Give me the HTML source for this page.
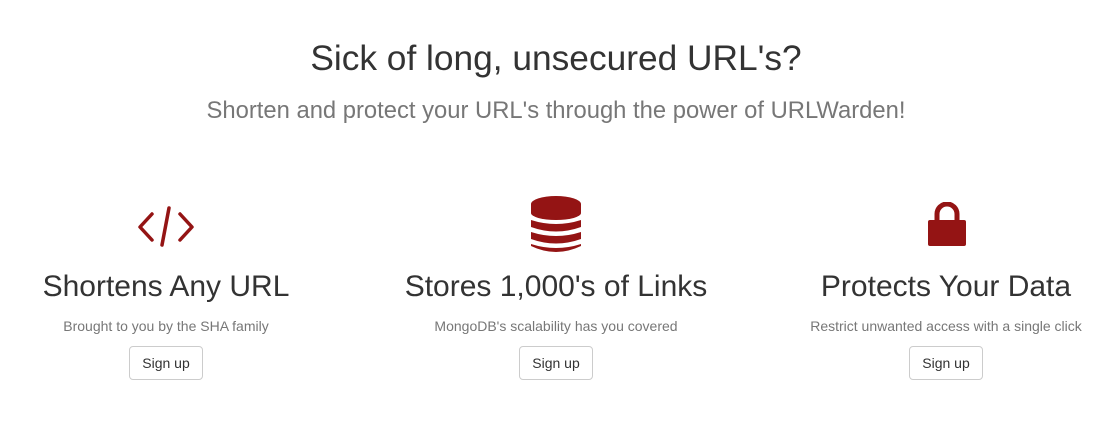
<!DOCTYPE html>
<html><head><style>
body{margin:0;width:1117px;height:424px;background:#fff;font-family:"Liberation Sans",sans-serif;color:#333;position:relative;overflow:hidden}
.c{position:absolute;text-align:center;white-space:nowrap;transform:translateX(-50%)}
h1{margin:0;font-weight:400;font-size:35.3px;line-height:40px}
.sub{font-size:23.8px;color:#777;line-height:28px}
h2{margin:0;font-weight:400;font-size:30px;line-height:34px}
.p{font-size:14px;color:#777;line-height:20px}
.btn{display:inline-block;box-sizing:border-box;width:74px;height:34px;border:1px solid #ccc;border-radius:4px;font-size:14px;line-height:32px;color:#333}
svg{position:absolute}
</style></head><body>
<div class="c" style="left:556px;top:39px"><h1>Sick of long, unsecured URL's?</h1></div>
<div class="c sub" style="left:556px;top:97px">Shorten and protect your URL's through the power of URLWarden!</div>

<svg style="left:137px;top:205px" width="58" height="43" viewBox="0 0 58 43">
<g fill="none" stroke="#941414" stroke-width="3.5" stroke-linecap="round" stroke-linejoin="round">
<path d="M15 9 L3 22 L15 35"/><path d="M43 9 L55 22 L43 35"/><path d="M32 3 L25 40"/></g></svg>

<svg style="left:531px;top:196px" width="50" height="57" viewBox="0 0 50 57">
<g fill="#941414">
<ellipse cx="25" cy="8" rx="25" ry="8"/><rect x="0" y="8" width="50" height="9"/><ellipse cx="25" cy="17" rx="25" ry="7"/>
<path d="M0 24 Q25 32 50 24 L50 31 Q25 40 0 31Z"/>
<path d="M0 36 Q25 44 50 36 L50 43 Q25 52 0 43Z"/>
<path d="M0 48 Q25 56 50 48 L50 50 Q25 62 0 50Z"/>
</g></svg>

<svg style="left:928px;top:202px" width="38" height="44" viewBox="0 0 38 44">
<path d="M9 19 V12 A10 10 0 0 1 29 12 V19" fill="none" stroke="#941414" stroke-width="5"/>
<rect x="0" y="18" width="38" height="26" rx="2" fill="#941414"/></svg>

<div class="c" style="left:166px;top:270px"><h2>Shortens Any URL</h2></div>
<div class="c" style="left:556px;top:270px"><h2>Stores 1,000's of Links</h2></div>
<div class="c" style="left:946px;top:270px"><h2>Protects Your Data</h2></div>
<div class="c p" style="left:166px;top:316px">Brought to you by the SHA family</div>
<div class="c p" style="left:556px;top:316px">MongoDB's scalability has you covered</div>
<div class="c p" style="left:946px;top:316px">Restrict unwanted access with a single click</div>
<div class="c" style="left:166px;top:346px"><span class="btn">Sign up</span></div>
<div class="c" style="left:556px;top:346px"><span class="btn">Sign up</span></div>
<div class="c" style="left:946px;top:346px"><span class="btn">Sign up</span></div>
</body></html>
